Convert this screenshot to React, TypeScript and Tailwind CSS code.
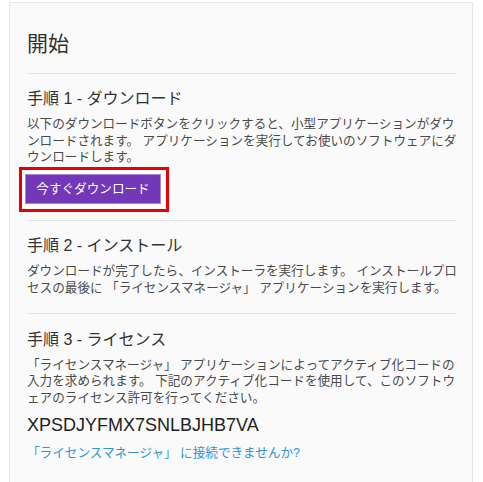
import React from 'react';

const font = { fontFamily: '"Liberation Sans", "Noto Sans CJK JP", sans-serif' };

function Step({ title, lines }: { title: string; lines: string[] }) {
  return (
    <div>
      <h3 className="text-[16px] leading-[20px] text-[#333]">{title}</h3>
      <p className="mt-[7px] whitespace-nowrap text-[12.6px] leading-[16.7px] text-[#4a4a4a]">
        {lines.map((l, i) => (
          <React.Fragment key={i}>
            {l}
            {i < lines.length - 1 && <br />}
          </React.Fragment>
        ))}
      </p>
    </div>
  );
}

export default function App() {
  return (
    <div className="min-h-[482px] bg-white pl-[9px] pt-[2px]" style={font}>
      <div className="h-[482px] w-[464px] border border-[#e6e6e6] bg-[#fafafa] pl-[17px] pr-[12px] pt-[28px]">
        <h1 className="text-[21px] leading-[26px] text-[#333]">開始</h1>
        <hr className="mt-[16px] mr-[3px] border-t border-[#e4e4e4]" />

        {/* step 1 */}
        <div className="pt-[15px]">
          <Step
            title="手順 1 - ダウンロード"
            lines={[
              '以下のダウンロードボタンをクリックすると、小型アプリケーションがダウ',
              'ンロードされます。 アプリケーションを実行してお使いのソフトウェアにダ',
              'ウンロードします。',
            ]}
          />
          <div className="mt-[1px] ml-[-8px] inline-block border-[3px] border-[#e60000] bg-white pl-[3px] pt-[4px] pr-[5px] pb-[5px]">
            <button className="block h-[30px] w-[136px] border border-[#a487cf] bg-[#7338b8] text-[12.6px] text-white">
              今すぐダウンロード
            </button>
          </div>
        </div>
        <hr className="mt-[8px] mr-[3px] border-t border-[#e4e4e4]" />

        {/* step 2 */}
        <div className="pt-[15px]">
          <Step
            title="手順 2 - インストール"
            lines={[
              'ダウンロードが完了したら、インストーラを実行します。 インストールプロ',
              'セスの最後に 「ライセンスマネージャ」 アプリケーションを実行します。',
            ]}
          />
        </div>
        <hr className="mt-[16px] mr-[3px] border-t border-[#e4e4e4]" />

        {/* step 3 */}
        <div className="pt-[16px]">
          <Step
            title="手順 3 - ライセンス"
            lines={[
              '「ライセンスマネージャ」 アプリケーションによってアクティブ化コードの',
              '入力を求められます。 下記のアクティブ化コードを使用して、このソフトウ',
              'ェアのライセンス許可を行ってください。',
            ]}
          />
          <div className="mt-[6px] text-[18px] leading-[24px] text-[#222]">XPSDJYFMX7SNLBJHB7VA</div>
          <a className="mt-[8px] block text-[12.6px] leading-[17px] text-[#2f96d0]" href="#">
            「ライセンスマネージャ」 に接続できませんか?
          </a>
        </div>
      </div>
    </div>
  );
}
